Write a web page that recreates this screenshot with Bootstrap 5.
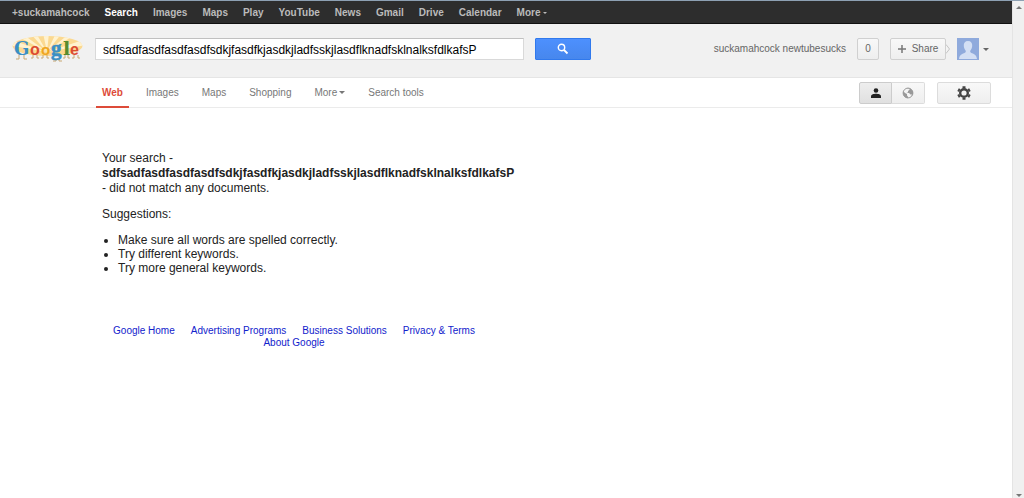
<!DOCTYPE html>
<html lang="en">
<head>
<meta charset="utf-8">
<meta name="viewport" content="width=device-width, initial-scale=1">
<title>Google Search</title>
<link href="https://cdn.jsdelivr.net/npm/bootstrap@5.3.0/dist/css/bootstrap.min.css" rel="stylesheet">
<style>
  body { font: 10px/12px "Liberation Sans", Arial, sans-serif; color: #222; border-top: 1px solid #8da0b3; background: #fff; }
  a { text-decoration: none; }
  button { font: inherit; }
  .topbar { background: #2d2d2d; border-bottom: 1px solid #111; height: 23px; padding: 2px 12px 0; gap: 15px; font-weight: bold; }
  .topbar a { color: #bbb; }
  .topbar a.active { color: #fff; }
  .caret { display: inline-block; border: 3px solid transparent; border-top-color: currentColor; border-bottom: 0; vertical-align: middle; }
  .caret-sm { border-width: 2px; border-bottom: 0; }
  .masthead { background: #f1f1f1; border-bottom: 1px solid #e5e5e5; height: 54px; padding: 0 23px 3px 12px; }
  .logo { width: 72px; margin-right: 11px; }
  .query { width: 429px; height: 22px; border: 1px solid #d9d9d9; border-top-color: #c0c0c0; border-radius: 0; padding: 2px 7px 0; font-size: 12px; line-height: 18px; color: #000; margin-right: 11px; }
  .go { width: 56px; height: 22px; background: linear-gradient(#4d90fe, #4787ed); border: 1px solid #3079ed; border-radius: 1px; }
  .chip { height: 22px; border: 1px solid #d0d0d0; border-radius: 2px; background: linear-gradient(#f8f8f8, #eee); color: #666; padding: 0; }
  .count { width: 22px; margin: 0 11px; }
  .share { width: 56px; gap: 6px; }
  .muted { color: #666; }
  .avatar { width: 22px; height: 22px; margin: 0 4px 0 7px; }
  .toolbar { height: 30px; border-bottom: 1px solid #ebebeb; padding: 0 21px 0 96px; }
  .tabs { gap: 11px; }
  .tabs a, .tabs button { color: #777; padding: 2px 6px 0; border: 0; border-bottom: 2px solid transparent; background: none; height: 30px; display: flex; align-items: center; gap: 2px; }
  .tabs a.active { color: #dd4b39; border-bottom-color: #dd4b39; font-weight: bold; }
  .view { width: 33px; border-color: #dcdcdc; }
  .view.on { background: linear-gradient(#eee, #e0e0e0); border-color: #ccc; border-radius: 2px 0 0 2px; }
  .view.off { border-left: 0; border-radius: 0 2px 2px 0; }
  .gear { width: 54px; margin-left: 12px; border-color: #dcdcdc; }
  .results { width: 416px; margin: 43px 0 0 102px; font-size: 12px; line-height: 15px; }
  .results p { margin: 0 0 11px; }
  .results ul { margin: 0; padding-left: 16px; line-height: 14px; }
  .foot { width: 384px; margin: 50px 0 0 102px; column-gap: 16px; }
  .foot a { color: #1122cc; }
  .scroller { width: 12px; background: #f0f0f0; border-left: 1px solid #e4e4e4; color: #777; padding: 5px 0 2px; }
  .flip { transform: rotate(180deg); }
</style>
</head>
<body>
<div class="d-flex min-vh-100">
  <div class="flex-grow-1">
    <nav class="topbar d-flex align-items-center" aria-label="Google products">
      <a href="#">+suckamahcock</a><a href="#" class="active">Search</a><a href="#">Images</a><a href="#">Maps</a><a href="#">Play</a><a href="#">YouTube</a><a href="#">News</a><a href="#">Gmail</a><a href="#">Drive</a><a href="#">Calendar</a><a href="#">More <span class="caret caret-sm"></span></a>
    </nav>
    <header class="masthead d-flex align-items-center">
      <a href="#" class="logo" aria-label="Google home">
        <svg class="d-block" width="72" height="28" viewBox="0 0 72 28">
          <defs><clipPath id="sun"><ellipse cx="35.500" cy="11" rx="35" ry="10"/></clipPath></defs>
          <ellipse cx="35.500" cy="11" rx="35" ry="10" fill="#fbd991"/>
          <g clip-path="url(#sun)" fill="#fff2cf">
            <path d="M35 17L-4 10V4zM35 17L3 0h9zM35 17L18-2h6zM35 17L31-2h6zM35 17L44-2h6zM35 17L58-2h8zM35 17L74 4v6z"/>
          </g>
          <path d="M7 20v4H4M12 20v4h3M21 20v3h-2M25 20v3h2M31 20v3h-2M35 20v3h2M44 24v2h-3M47 24v2h3M53 20v3h-2M56 20v3h2M62 20v3h-2M66 20v3h2" fill="none" stroke="#c9a873"/>
          <g font-weight="bold" font-family="Liberation Sans, sans-serif">
            <text x="2" y="20" font-size="18" fill="#3a8fc4" font-family="DejaVu Serif, serif">G</text>
            <text x="18" y="20" font-size="16" fill="#dc4a32">o</text>
            <text x="29" y="20" font-size="15" fill="#efa51e">o</text>
            <text x="39" y="20" font-size="21" fill="#3a8fc4" stroke="#3a8fc4" stroke-width=".6" font-family="Liberation Serif, serif">g</text>
            <text x="51" y="20" font-size="19" fill="#568b2e" font-family="DejaVu Serif, serif">l</text>
            <text x="58" y="20" font-size="16" fill="#dc4a32">e</text>
          </g>
        </svg>
      </a>
      <form class="d-flex" onsubmit="return false">
        <input class="query" type="text" aria-label="Search" value="sdfsadfasdfasdfasdfsdkjfasdfkjasdkjladfsskjlasdflknadfsklnalksfdlkafsP">
        <button class="go d-flex align-items-center justify-content-center p-0" aria-label="Search">
          <svg width="12" height="12" viewBox="0 0 12 12" fill="none" stroke="#fff"><circle cx="4.500" cy="4.500" r="3.200" stroke-width="1.400"/><path d="M7 7l3.500 3.500" stroke-width="1.800"/></svg>
        </button>
      </form>
      <div class="d-flex align-items-center ms-auto">
        <a href="#" class="muted">suckamahcock newtubesucks</a>
        <button class="chip count">0</button>
        <button class="chip share d-flex align-items-center justify-content-center">
          <svg width="8" height="8" viewBox="0 0 8 8"><path d="M4 0v8M0 4h8" stroke="#777" stroke-width="1.500"/></svg>Share
        </button>
        <svg width="4" height="10" viewBox="0 0 4 10" fill="#f4f4f4" stroke="#c4c4c4"><path d="M0 .5L3.500 5L0 9.500"/></svg>
        <button class="border-0 bg-transparent p-0 d-flex align-items-center muted" aria-label="Account">
          <svg class="avatar" viewBox="0 0 22 22"><path fill="#8faadc" d="M0 0h22v22H0z"/><path fill="#d3dff4" d="M11 3c3 0 4.500 2 4.200 5-.2 2-1 3.500-1.900 4.700-.4 1.300.3 2 1.700 2.500 2.500.8 4.500 1.800 5 5.800H2c.5-4 2.500-5 5-5.800 1.400-.5 2.100-1.200 1.700-2.500C7.800 11.500 7 10 6.800 8 6.500 5 8 3 11 3z"/></svg>
          <span class="caret"></span>
        </button>
      </div>
    </header>
    <div class="toolbar d-flex align-items-center">
      <nav class="tabs d-flex" aria-label="Search types">
        <a href="#" class="active">Web</a><a href="#">Images</a><a href="#">Maps</a><a href="#">Shopping</a><button>More <span class="caret"></span></button><button>Search tools</button>
      </nav>
      <div class="d-flex ms-auto">
        <button class="chip view on d-flex align-items-center justify-content-center" aria-label="Personal results">
          <svg width="10" height="10" viewBox="0 0 10 10" fill="#222"><circle cx="5" cy="2.500" r="2.300"/><path d="M0 10V8.300C0 6.500 2.800 5.800 5 5.800s5 .7 5 2.500V10z"/></svg>
        </button>
        <button class="chip view off d-flex align-items-center justify-content-center" aria-label="Global results">
          <svg width="12" height="12" viewBox="0 0 12 12"><circle cx="6" cy="6" r="4.900" fill="#f4f4f4" stroke="#999"/><path fill="#999" d="M1.200 4L3 6l2 1v1.500l1 1.200v1.500C3 11 1 9 1 6zM4 1.500L7.500 1v1.800L6 4v1.200L4.500 6H7l1.500 1.500H10L9 10l2-3V4.500L9 2 6 .8z"/></svg>
        </button>
        <button class="chip gear d-flex align-items-center justify-content-center" aria-label="Settings">
          <svg width="14" height="14" viewBox="0 0 14 14" fill="none" stroke="#444"><circle cx="7" cy="7" r="3.800" stroke-width="2.400"/><path d="M5.500 1.200h3M5.500 12.800h3M1.200 5.400l1.500-2.600M11.300 11.200l1.500-2.600M1.200 8.600l1.500 2.600M11.300 2.800l1.500 2.600" stroke-width="2"/></svg>
        </button>
      </div>
    </div>
    <main>
      <div class="results">
        <p>Your search - <b class="d-block">sdfsadfasdfasdfasdfsdkjfasdfkjasdkjladfsskjlasdflknadfsklnalksfdlkafsP</b> - did not match any documents.</p>
        <p>Suggestions:</p>
        <ul>
          <li>Make sure all words are spelled correctly.</li>
          <li>Try different keywords.</li>
          <li>Try more general keywords.</li>
        </ul>
      </div>
    </main>
    <footer class="foot d-flex flex-wrap justify-content-center">
      <a href="#">Google Home</a><a href="#">Advertising Programs</a><a href="#">Business Solutions</a><a href="#">Privacy &amp; Terms</a><a href="#">About Google</a>
    </footer>
  </div>
  <div class="scroller d-flex flex-column justify-content-between align-items-center" aria-hidden="true">
    <span class="caret flip"></span><span class="caret"></span>
  </div>
</div>
<script src="https://cdn.jsdelivr.net/npm/bootstrap@5.3.0/dist/js/bootstrap.bundle.min.js"></script>
</body>
</html>
